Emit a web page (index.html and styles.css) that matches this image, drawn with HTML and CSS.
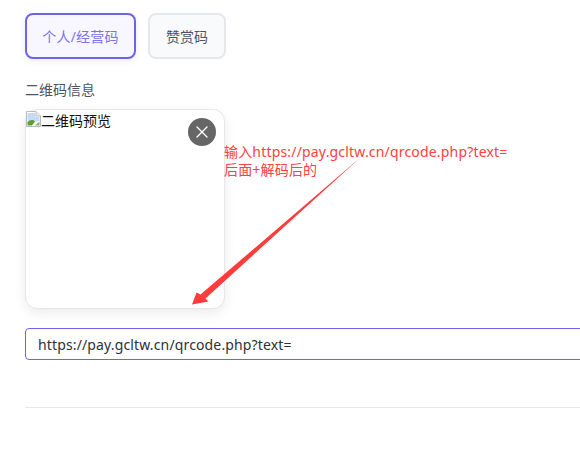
FILE: index.html
```html
<!DOCTYPE html>
<html lang="zh-CN">
<head>
    <meta charset="UTF-8" />
    <title>二维码信息</title>
    <link rel="stylesheet" href="styles.css">
</head>
<body>
    <div class="form">
        <div class="tabs">
            <button class="tab active">个人/经营码</button>
            <button class="tab">赞赏码</button>
        </div>

        <div class="label">二维码信息</div>

        <div class="preview">
            <span class="brokenImg">
                <svg width="16" height="16" viewBox="0 0 16 16">
                    <path d="M1.500 .5H11L15.500 5V15.500H1.500Z" fill="#fff" stroke="#b4bdc6"/>
                    <path d="M11 .5V5H15.500" fill="#e8edf2" stroke="#b4bdc6"/>
                    <path d="M2.500 2H10.500V6H14.500V10L2.500 12Z" fill="#c6daf5"/>
                    <path d="M2.500 14.500V11.500C5 8.500 8 8.500 10 10.500L7 14.500Z" fill="#5d9e3a"/>
                    <path d="M10 14.500L14.500 10.500V14.500Z" fill="#7dbb55"/>
                </svg>二维码预览
            </span>
            <button class="closeBtn">
                <svg width="14" height="14" viewBox="0 0 14 14">
                    <path d="M2 2L12 12M12 2L2 12" stroke="#fff" stroke-width="1.400" stroke-linecap="round"/>
                </svg>
            </button>
        </div>

        <input class="urlInput" type="text" value="https://pay.gcltw.cn/qrcode.php?text=" />

        <div class="divider"></div>
    </div>

    <div class="note">输入https://pay.gcltw.cn/qrcode.php?text=<br />后面+解码后的</div>

    <svg class="arrow" width="580" height="468" viewBox="0 0 580 468">
        <path d="M361 157L205.500 298.500L208.500 301.500L192 304.500L196.500 292.500L200.500 294.500Z" fill="#ff3b3b"/>
    </svg>
</body>
</html>
```

FILE: styles.css
```css
html, body {
    overflow: hidden;
}
body {
    margin: 0;
    height: 468px;
    background-color: #fff;
    font-family: "Noto Sans", "Noto Sans CJK SC", sans-serif;
    font-size: 14px;
}
.form {
    padding: 13px 0 0 25px;
    overflow: hidden;
}
.tabs {
    display: flex;
    gap: 12px;
}
.tab {
    height: 46px;
    padding: 0 16px;
    border: 2px solid #e5e7eb;
    border-radius: 8px;
    background-color: #f9fafb;
    color: #4b5563;
    font-family: inherit;
    font-size: 14px;
}
.tab.active {
    width: 111px;
    padding: 0;
    border-color: #6c63e8;
    background-color: #f8f7ff;
    color: #7b73ea;
    letter-spacing: 0.2px;
    box-shadow: 0 2px 6px rgba(108, 99, 232, 0.12);
}
.label {
    margin-top: 21px;
    height: 20px;
    line-height: 20px;
    color: #4b5563;
}
.preview {
    position: relative;
    width: 198px;
    height: 198px;
    margin-top: 9px;
    border: 1px solid #e5e7eb;
    border-radius: 12px;
    background-color: #fff;
    box-shadow: 0 4px 12px rgba(0, 0, 0, 0.08);
}
.brokenImg {
    display: flex;
    height: 20px;
    margin-left: -1px;
    padding-top: 1px;
    line-height: 20px;
    color: #111;
}
.closeBtn {
    position: absolute;
    top: 8px;
    right: 8px;
    display: flex;
    align-items: center;
    justify-content: center;
    width: 28px;
    height: 28px;
    padding: 0;
    border: 0;
    border-radius: 50%;
    background-color: #666;
}
.urlInput {
    display: block;
    box-sizing: border-box;
    width: 600px;
    height: 32px;
    margin-top: 19px;
    padding: 0 12px;
    border: 1px solid #6c63e8;
    border-radius: 4px;
    outline: none;
    color: #2d3139;
    font-family: inherit;
    font-size: 14px;
    letter-spacing: 0.14px;
}
.divider {
    margin-top: 47px;
    height: 1px;
    background-color: #e5e7eb;
}
.note {
    position: absolute;
    top: 143px;
    left: 224px;
    font-size: 14px;
    line-height: 18px;
    letter-spacing: 0.18px;
    color: #ff4040;
}
.arrow {
    position: absolute;
    top: 0;
    left: 0;
    pointer-events: none;
}
```
